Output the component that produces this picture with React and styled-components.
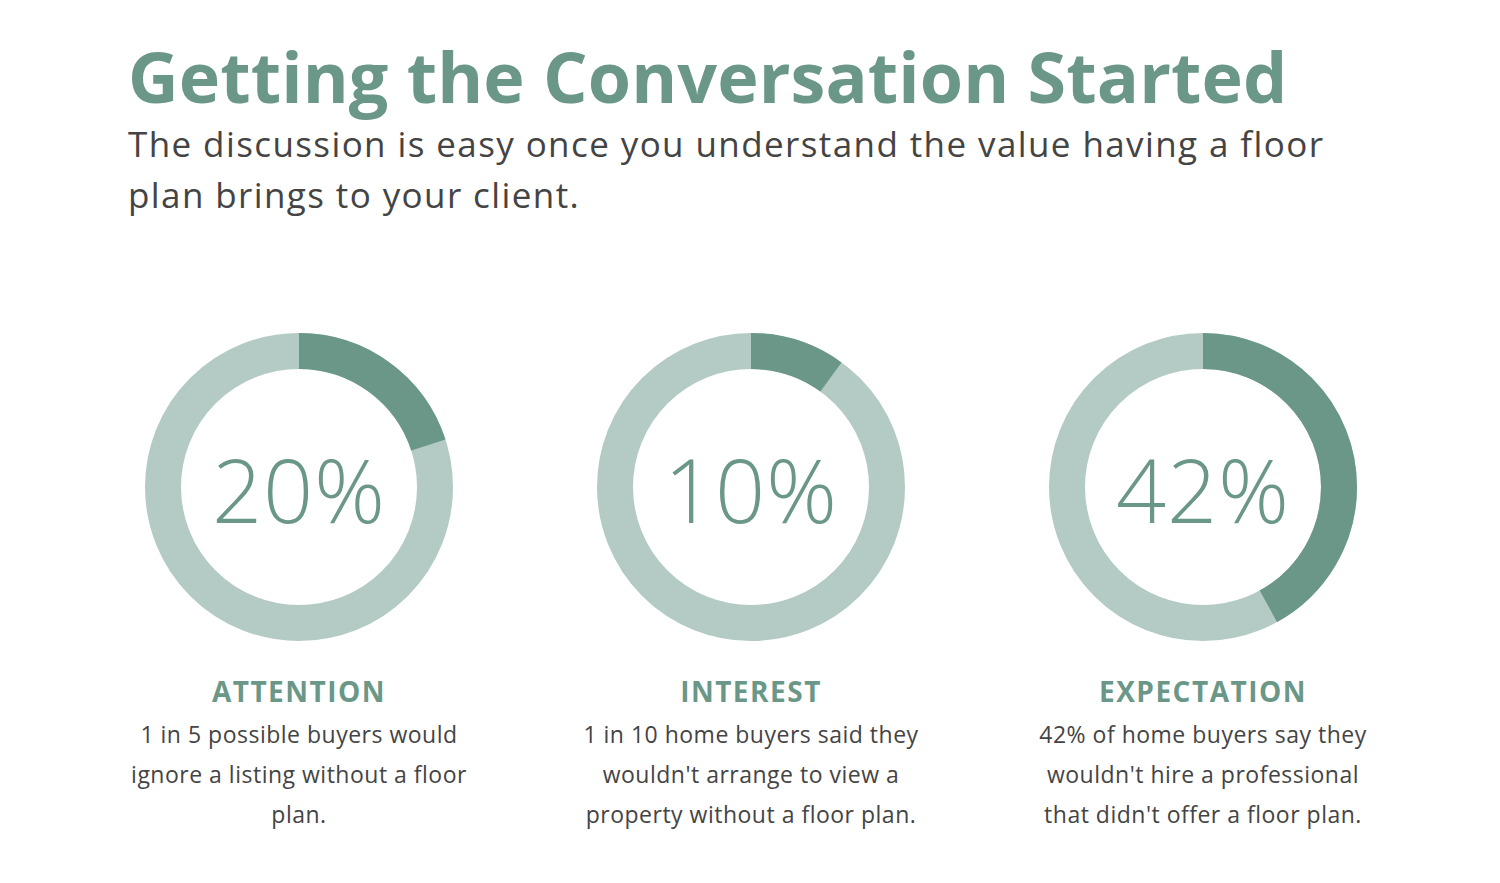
import React from "react";
import styled, { createGlobalStyle } from "styled-components";

const GlobalStyle = createGlobalStyle`
  html, body {
    margin: 0;
    padding: 0;
    background: #ffffff;
  }
  body {
    font-family: "Open Sans", "Noto Sans", sans-serif;
  }
`;

const DARK = "#6a9787";
const LIGHT = "#b3cbc4";

const Page = styled.div`
  width: 1500px;
  height: 883px;
  box-sizing: border-box;
  padding-top: 34px;
  overflow: hidden;
`;

const Header = styled.header`
  padding-left: 128px;
  width: 1220px;
`;

const Title = styled.h1`
  margin: 0;
  font-size: 70px;
  font-weight: 700;
  line-height: 84px;
  color: ${DARK};
  letter-spacing: 0.1px;
`;

const Subtitle = styled.p`
  margin: 0;
  font-size: 35px;
  line-height: 51px;
  color: #444444;
  font-weight: 400;
  letter-spacing: 1.4px;
`;

const Stats = styled.section`
  display: grid;
  grid-template-columns: repeat(3, 452px);
  margin-left: 73px;
  margin-top: 113px;
`;

const Stat = styled.div`
  display: flex;
  flex-direction: column;
  align-items: center;
  text-align: center;
`;

const Donut = styled.div`
  position: relative;
  width: 308px;
  height: 308px;
`;

const Value = styled.span`
  position: absolute;
  inset: 0;
  padding-top: 4px;
  display: flex;
  align-items: center;
  justify-content: center;
  font-size: 88px;
  font-weight: 300;
  color: ${DARK};
  letter-spacing: 0.8px;
`;

const Label = styled.h2`
  margin: 33px 0 0;
  font-size: 28px;
  font-weight: 700;
  line-height: 34px;
  color: ${DARK};
  letter-spacing: 1.5px;
`;

const Text = styled.p`
  margin: 6px 0 0;
  max-width: 350px;
  font-size: 23px;
  line-height: 40px;
  color: #444444;
  letter-spacing: 0.5px;
`;

const Ring = ({ pct }) => {
  const r = 136;
  const c = 2 * Math.PI * r;
  return (
    <svg width="308" height="308" viewBox="0 0 308 308">
      <circle cx="154" cy="154" r={r} fill="none" stroke={LIGHT} strokeWidth="36" />
      <circle
        cx="154"
        cy="154"
        r={r}
        fill="none"
        stroke={DARK}
        strokeWidth="36"
        strokeDasharray={`${(c * pct) / 100} ${c}`}
        transform="rotate(-90 154 154)"
      />
    </svg>
  );
};

const stats = [
  {
    pct: 20,
    label: "ATTENTION",
    text: "1 in 5 possible buyers would ignore a listing without a floor plan.",
  },
  {
    pct: 10,
    label: "INTEREST",
    text: "1 in 10 home buyers said they wouldn't arrange to view a property without a floor plan.",
  },
  {
    pct: 42,
    label: "EXPECTATION",
    text: "42% of home buyers say they wouldn't hire a professional that didn't offer a floor plan.",
  },
];

const App = () => {
  return (
    <>
      <GlobalStyle />
      <Page>
        <Header>
          <Title>Getting the Conversation Started</Title>
          <Subtitle>
            The discussion is easy once you understand the value having a floor plan brings to your client.
          </Subtitle>
        </Header>
        <Stats>
          {stats.map((s) => (
            <Stat key={s.label}>
              <Donut>
                <Ring pct={s.pct} />
                <Value>{s.pct}%</Value>
              </Donut>
              <Label>{s.label}</Label>
              <Text>{s.text}</Text>
            </Stat>
          ))}
        </Stats>
      </Page>
    </>
  );
};

export default App;
